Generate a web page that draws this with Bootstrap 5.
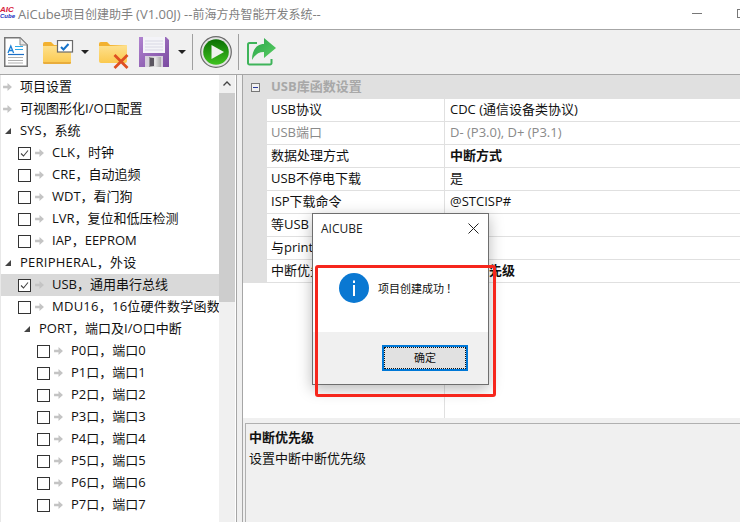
<!DOCTYPE html>
<html lang="zh">
<head>
<meta charset="utf-8">
<link href="https://cdn.jsdelivr.net/npm/bootstrap@5.3.0/dist/css/bootstrap.min.css" rel="stylesheet">
<style>
html,body{margin:0;width:740px;height:522px;overflow:hidden;background:#f0f0f0}
body{font-family:"Open Sans","Noto Sans CJK SC",sans-serif;font-size:13px;line-height:22px;color:#111}
.app-title{height:29px;background:#fff;color:#808080;font-size:12px;position:relative;padding-bottom:1px}
.app-title .ttl{margin-left:18px}
.ttl .lat{font-size:13px}
.lat-w{letter-spacing:.25px}
.app-logo{position:absolute;left:0;top:6px;width:14px;font:italic 700 8px/7px "Liberation Sans",sans-serif;color:#d8203a}
.app-logo i{display:block;color:#2030c0;font-size:6px;line-height:6px}
.win-min{position:absolute;left:692px;top:13px;width:10px;height:1px;background:#777}
.win-max{position:absolute;left:737px;top:9px;width:10px;height:9px;border:1px solid #777}
.tools{height:46px;background:#f0f0f0;border-top:1px solid #a6a6a6;border-bottom:1px solid #a6a6a6}
.tools svg{display:block;flex:none}
.tsep{width:1px;height:36px;background:#a0a0a0;flex:none}
.caret-d{width:0;height:0;border-left:4px solid transparent;border-right:4px solid transparent;border-top:4px solid #222;flex:none}
.main-area{height:448px}
.tree-pane{width:237px;height:448px;background:#fff;border-right:1px solid #a6a6a6;border-left:1px solid #e8e8e8;flex:none;position:relative;overflow:hidden}
.tree-list{width:218px;padding-top:1px;overflow:hidden}
.tree-row{height:22px;padding-bottom:2px;white-space:nowrap;overflow:hidden;display:flex;align-items:center}
.tree-row.sel{background:#d9d9d9}
.tree-row.l1{padding-left:2px}
.tree-row.l2{padding-left:17px}
.tree-row.l3{padding-left:23px}
.tree-row.l4{padding-left:36px}
.cbx{width:13px;height:13px;border:1px solid #333;background:#fff;flex:none;margin:2px 4px 0 0;display:block}
.arw{width:9px;height:8px;flex:none;margin:2px 8px 0 0;display:block}
.tri{width:0;height:0;border-style:solid;border-width:0 0 6px 6px;border-color:transparent transparent #444 transparent;flex:none;margin:2px 9px 0 0}
.tri.ind{margin-left:2px}
.sbar{position:absolute;left:218px;top:0;width:16px;height:448px;background:#f0f0f0}
.sbar .thumb{position:absolute;left:0;top:18px;width:16px;height:209px;background:#cdcdcd}
.sbar svg{position:absolute;left:4px;top:6px}
.gap-pane{width:5px;flex:none}
.prop-pane{flex:1 1 auto;height:448px;border-left:1px solid #a6a6a6;background:#f0f0f0}
.pgrid{height:343px;background:#fff;position:relative;overflow:hidden}
.pgroup{height:24px;padding:0 0 2px 8px;background:#e0e0e0;display:flex;align-items:center;color:#a8a8a8;font-weight:700}
.expander{width:9px;height:9px;border:1px solid #777;background:#f0f0f0;margin:2px 11px 0 0;position:relative;flex:none}
.expander:after{content:"";position:absolute;left:1px;top:3px;width:5px;height:1px;background:#2a3a9a}
.prow{height:23px;display:flex;border-bottom:1px solid #e0e0e0;white-space:nowrap;line-height:20px}
.prow .mrg{width:24px;background:#e0e0e0;flex:none}
.prow .pname{width:178px;padding-left:4px;border-right:1px solid #e0e0e0;overflow:hidden;flex:none}
.prow .pval{padding-left:5px;flex:1}
.prow.dim{color:#8a8a8a}
.pfill{position:absolute;top:208px;bottom:0;left:24px;width:178px;border-right:1px solid #e0e0e0}
.pdesc{height:100px;margin:5px 0 0 2px;border:1px solid #b0b0b0;border-right:0;border-bottom:0;padding:3px 0 0 3px;line-height:21px}
.dlg{position:absolute;left:312px;top:213px;width:177px;height:172px;border:1px solid #6e6e6e;background:#fff;box-shadow:0 4px 14px rgba(0,0,0,.28)}
.dlg-head{height:30px;padding:0 9px 1px 8px;display:flex;align-items:center;justify-content:space-between;font-size:12px;color:#222}
.dlg-body{height:88px;padding:29px 0 0 26px;display:flex;gap:9px;font-size:11px;line-height:30px}
.dlg-body svg{flex:none}
.bang{font-family:"Noto Sans CJK TC",sans-serif;margin-left:2px}
.dlg-foot{height:52px;background:#f0f0f0;padding:13px 0 0 69px}
.dlg-btn{width:86px;height:26px;border:2px solid #0078d7;background:#e1e1e1;font-size:11px;line-height:18px;text-align:center;color:#111;outline:1px dotted #111;outline-offset:-3px;padding-top:2px}
.redbox{position:absolute;left:315px;top:265px;width:181px;height:132px;border:3px solid #f6261c;border-radius:3px}
</style>
</head>
<body>
<svg width="0" height="0" class="position-absolute"><defs>
  <linearGradient id="gf" x1="0" y1="0" x2="0" y2="1"><stop offset="0" stop-color="#fee59a"/><stop offset="1" stop-color="#fbc94e"/></linearGradient>
  <linearGradient id="gp" x1="0" y1="0" x2="1" y2="1"><stop offset="0" stop-color="#b184d0"/><stop offset="1" stop-color="#7a4aa0"/></linearGradient>
  <linearGradient id="gm" x1="0" y1="0" x2="1" y2="0"><stop offset="0" stop-color="#8d8d8d"/><stop offset=".5" stop-color="#e8e8e8"/><stop offset="1" stop-color="#a9a9a9"/></linearGradient>
  <linearGradient id="gg" x1="0" y1="0" x2="0" y2="1"><stop offset="0" stop-color="#0a6f04"/><stop offset="1" stop-color="#3fc21f"/></linearGradient>
  <linearGradient id="gs" x1="0" y1="0" x2="1" y2="1"><stop offset="0" stop-color="#27a34a"/><stop offset="1" stop-color="#5ccf62"/></linearGradient>
</defs></svg>
<header class="app-title d-flex align-items-center">
  <div class="app-logo">AIC<i>Cube</i></div>
  <span class="ttl"><span class="lat">AiCube</span>项目创建助手 <span class="lat">(V1.00J) --</span>前海方舟智能开发系统<span class="lat">--</span></span>
  <span class="win-min"></span><span class="win-max"></span>
</header>
<div class="tools d-flex align-items-center">
  <svg width="24" height="30" viewBox="0 0 24 30" style="margin-left:4px"><path d="M.75.75H16L23.250 8V29.250H.75Z" fill="#fff" stroke="#777" stroke-width="1.500"/><path d="M16 .75V8H23.250Z" fill="#e8e8e8" stroke="#888"/><path d="M4 16l2.800-7 2.800 7M5 13.500h3.500" fill="none" stroke="#1c7fd6" stroke-width="1.300"/><path d="M11 9.500h8M11 12.500h8" stroke="#29a8e8"/><path d="M4 17.500h16" stroke="#1c6fc6" stroke-width="1.200"/><path d="M4 20.500h15M4 23.500h15M4 26h15" stroke="#b0b0b0"/></svg>
  <svg width="31" height="25" viewBox="0 0 31 25" style="margin-left:15px"><path d="M0 4a2 2 0 0 1 2-2h6l3 3h17v17a2 2 0 0 1-2 2H2a2 2 0 0 1-2-2Z" fill="url(#gf)"/><path d="M0 4a2 2 0 0 1 2-2h6l3 3 17 1H0Z" fill="#f2b130"/><path d="M0 22h28v.5a1.500 1.500 0 0 1-1.500 1.500H1.500A1.500 1.500 0 0 1 0 22.500Z" fill="#e9ad3c"/><rect x="14.500" y=".5" width="15" height="11.500" fill="#fff" stroke="#6a6a6a" stroke-width="1.200"/><path d="M18 7l2.500 2.500 5-5.500" fill="none" stroke="#1673c9" stroke-width="2"/></svg>
  <span class="caret-d" style="margin-left:7px"></span>
  <svg width="30" height="30" viewBox="0 0 30 30" style="margin-left:10px;margin-top:6px"><path d="M0 4a2 2 0 0 1 2-2h6l3 3h17v16a2 2 0 0 1-2 2H2a2 2 0 0 1-2-2Z" fill="url(#gf)"/><path d="M0 4a2 2 0 0 1 2-2h6l3 3 17 1H0Z" fill="#f2b130"/><path d="M15.500 15l13 13M28.500 15l-13 13" stroke="#de5022" stroke-width="2.800"/></svg>
  <svg width="30" height="30" viewBox="0 0 30 30" style="margin-left:10px"><path d="M0 0H27L30 3V30H0Z" fill="url(#gp)"/><rect x="4" y="0" width="22" height="16" fill="#f4f4f8"/><path d="M6 4h18M6 7h18M6 10h18M6 13h18" stroke="#d8d8e4"/><rect x="6" y="19" width="18" height="11" fill="#d6d0dc"/><rect x="10" y="20" width="12" height="10" fill="url(#gm)"/><rect x="11" y="21" width="4" height="8" fill="#5b5660"/></svg>
  <span class="caret-d" style="margin-left:9px"></span>
  <span class="tsep" style="margin-left:6px"></span>
  <svg width="32" height="32" viewBox="0 0 32 32" style="margin-left:7px"><circle cx="16" cy="16" r="15.300" fill="#e4e4e4" stroke="#6a6a6a" stroke-width="1.200"/><circle cx="16" cy="16" r="12.800" fill="url(#gg)"/><path d="M11.500 9L24 16 11.500 23Z" fill="#eef2ee"/></svg>
  <span class="tsep" style="margin-left:6px"></span>
  <svg width="30" height="28" viewBox="0 0 30 28" style="margin-left:8px"><path d="M10 5H2.500a1.500 1.500 0 0 0-1.500 1.500V25a1.500 1.500 0 0 0 1.500 1.500H23a1.500 1.500 0 0 0 1.500-1.500V21" fill="none" stroke="#3eb45a" stroke-width="2"/><path d="M17 0L29 10 17 20V14C11 14 8 17 5 22 5 13 9 6 17 6Z" fill="url(#gs)"/></svg>
</div>
<div class="main-area d-flex">
  <nav class="tree-pane">
    <div class="tree-list">
      <div class="tree-row l1"><svg class="arw" viewBox="0 0 10 9"><path d="M0 3h5V0l5 4.500L5 9V6H0Z" fill="#c4c4c4"/></svg>项目设置</div>
      <div class="tree-row l1"><svg class="arw" viewBox="0 0 10 9"><path d="M0 3h5V0l5 4.500L5 9V6H0Z" fill="#c4c4c4"/></svg>可视图形化I/O口配置</div>
      <div class="tree-row l1"><span class="tri ind"></span>SYS，系统</div>
      <div class="tree-row l2"><svg class="cbx" viewBox="0 0 11 11"><path d="M2 5.500l2.500 2.500L9 2.500" fill="none" stroke="#444" stroke-width="1.100"/></svg><svg class="arw" viewBox="0 0 10 9"><path d="M0 3h5V0l5 4.500L5 9V6H0Z" fill="#c4c4c4"/></svg>CLK，时钟</div>
      <div class="tree-row l2"><span class="cbx"></span><svg class="arw" viewBox="0 0 10 9"><path d="M0 3h5V0l5 4.500L5 9V6H0Z" fill="#c4c4c4"/></svg>CRE，自动追频</div>
      <div class="tree-row l2"><span class="cbx"></span><svg class="arw" viewBox="0 0 10 9"><path d="M0 3h5V0l5 4.500L5 9V6H0Z" fill="#c4c4c4"/></svg>WDT，看门狗</div>
      <div class="tree-row l2"><span class="cbx"></span><svg class="arw" viewBox="0 0 10 9"><path d="M0 3h5V0l5 4.500L5 9V6H0Z" fill="#c4c4c4"/></svg>LVR，复位和低压检测</div>
      <div class="tree-row l2"><span class="cbx"></span><svg class="arw" viewBox="0 0 10 9"><path d="M0 3h5V0l5 4.500L5 9V6H0Z" fill="#c4c4c4"/></svg>IAP，EEPROM</div>
      <div class="tree-row l1"><span class="tri ind"></span><span class="lat-w">PERIPHERAL，外设</span></div>
      <div class="tree-row l2 sel"><svg class="cbx" viewBox="0 0 11 11"><path d="M2 5.500l2.500 2.500L9 2.500" fill="none" stroke="#444" stroke-width="1.100"/></svg><svg class="arw" viewBox="0 0 10 9"><path d="M0 3h5V0l5 4.500L5 9V6H0Z" fill="#c4c4c4"/></svg>USB，通用串行总线</div>
      <div class="tree-row l2"><span class="cbx"></span><svg class="arw" viewBox="0 0 10 9"><path d="M0 3h5V0l5 4.500L5 9V6H0Z" fill="#c4c4c4"/></svg><span class="lat-w">MDU16，16位硬件数学函数</span></div>
      <div class="tree-row l3"><span class="tri"></span>PORT，端口及I/O口中断</div>
      <div class="tree-row l4"><span class="cbx"></span><svg class="arw" viewBox="0 0 10 9"><path d="M0 3h5V0l5 4.500L5 9V6H0Z" fill="#c4c4c4"/></svg>P0口，端口0</div>
      <div class="tree-row l4"><span class="cbx"></span><svg class="arw" viewBox="0 0 10 9"><path d="M0 3h5V0l5 4.500L5 9V6H0Z" fill="#c4c4c4"/></svg>P1口，端口1</div>
      <div class="tree-row l4"><span class="cbx"></span><svg class="arw" viewBox="0 0 10 9"><path d="M0 3h5V0l5 4.500L5 9V6H0Z" fill="#c4c4c4"/></svg>P2口，端口2</div>
      <div class="tree-row l4"><span class="cbx"></span><svg class="arw" viewBox="0 0 10 9"><path d="M0 3h5V0l5 4.500L5 9V6H0Z" fill="#c4c4c4"/></svg>P3口，端口3</div>
      <div class="tree-row l4"><span class="cbx"></span><svg class="arw" viewBox="0 0 10 9"><path d="M0 3h5V0l5 4.500L5 9V6H0Z" fill="#c4c4c4"/></svg>P4口，端口4</div>
      <div class="tree-row l4"><span class="cbx"></span><svg class="arw" viewBox="0 0 10 9"><path d="M0 3h5V0l5 4.500L5 9V6H0Z" fill="#c4c4c4"/></svg>P5口，端口5</div>
      <div class="tree-row l4"><span class="cbx"></span><svg class="arw" viewBox="0 0 10 9"><path d="M0 3h5V0l5 4.500L5 9V6H0Z" fill="#c4c4c4"/></svg>P6口，端口6</div>
      <div class="tree-row l4"><span class="cbx"></span><svg class="arw" viewBox="0 0 10 9"><path d="M0 3h5V0l5 4.500L5 9V6H0Z" fill="#c4c4c4"/></svg>P7口，端口7</div>
    </div>
    <div class="sbar"><svg width="8" height="5" viewBox="0 0 8 5"><path d="M.5 4.500L4 1l3.500 3.500" fill="none" stroke="#444" stroke-width="1.300"/></svg><div class="thumb"></div></div>
  </nav>
  <div class="gap-pane"></div>
  <section class="prop-pane">
    <div class="pgrid">
      <div class="pgroup"><span class="expander"></span>USB库函数设置</div>
      <div class="prow"><span class="mrg"></span><span class="pname">USB协议</span><span class="pval">CDC (通信设备类协议)</span></div>
      <div class="prow dim"><span class="mrg"></span><span class="pname">USB端口</span><span class="pval">D- (P3.0), D+ (P3.1)</span></div>
      <div class="prow"><span class="mrg"></span><span class="pname">数据处理方式</span><span class="pval fw-bold">中断方式</span></div>
      <div class="prow"><span class="mrg"></span><span class="pname">USB不停电下载</span><span class="pval">是</span></div>
      <div class="prow"><span class="mrg"></span><span class="pname">ISP下载命令</span><span class="pval">@STCISP#</span></div>
      <div class="prow"><span class="mrg"></span><span class="pname">等USB</span><span class="pval"></span></div>
      <div class="prow"><span class="mrg"></span><span class="pname">与printf</span><span class="pval"></span></div>
      <div class="prow"><span class="mrg"></span><span class="pname">中断优先级</span><span class="pval fw-bold">最低优先级</span></div>
      <div class="pfill"></div>
    </div>
    <div class="pdesc"><div class="fw-bold">中断优先级</div><div>设置中断中断优先级</div></div>
  </section>
</div>
<div class="dlg" role="dialog">
  <div class="dlg-head"><span>AICUBE</span><svg width="11" height="11" viewBox="0 0 11 11"><path d="M.5.500l10 10M10.500.500l-10 10" stroke="#222"/></svg></div>
  <div class="dlg-body"><svg width="30" height="30" viewBox="0 0 30 30"><circle cx="15" cy="15" r="15" fill="#0a78d2"/><rect x="14" y="12" width="2" height="11" fill="#fff"/><rect x="14" y="7.500" width="2" height="2.500" fill="#fff"/></svg><span>项目创建成功<span class="bang">！</span></span></div>
  <div class="dlg-foot"><div class="dlg-btn">确定</div></div>
</div>
<div class="redbox"></div>
<script src="https://cdn.jsdelivr.net/npm/bootstrap@5.3.0/dist/js/bootstrap.bundle.min.js"></script>
</body>
</html>
